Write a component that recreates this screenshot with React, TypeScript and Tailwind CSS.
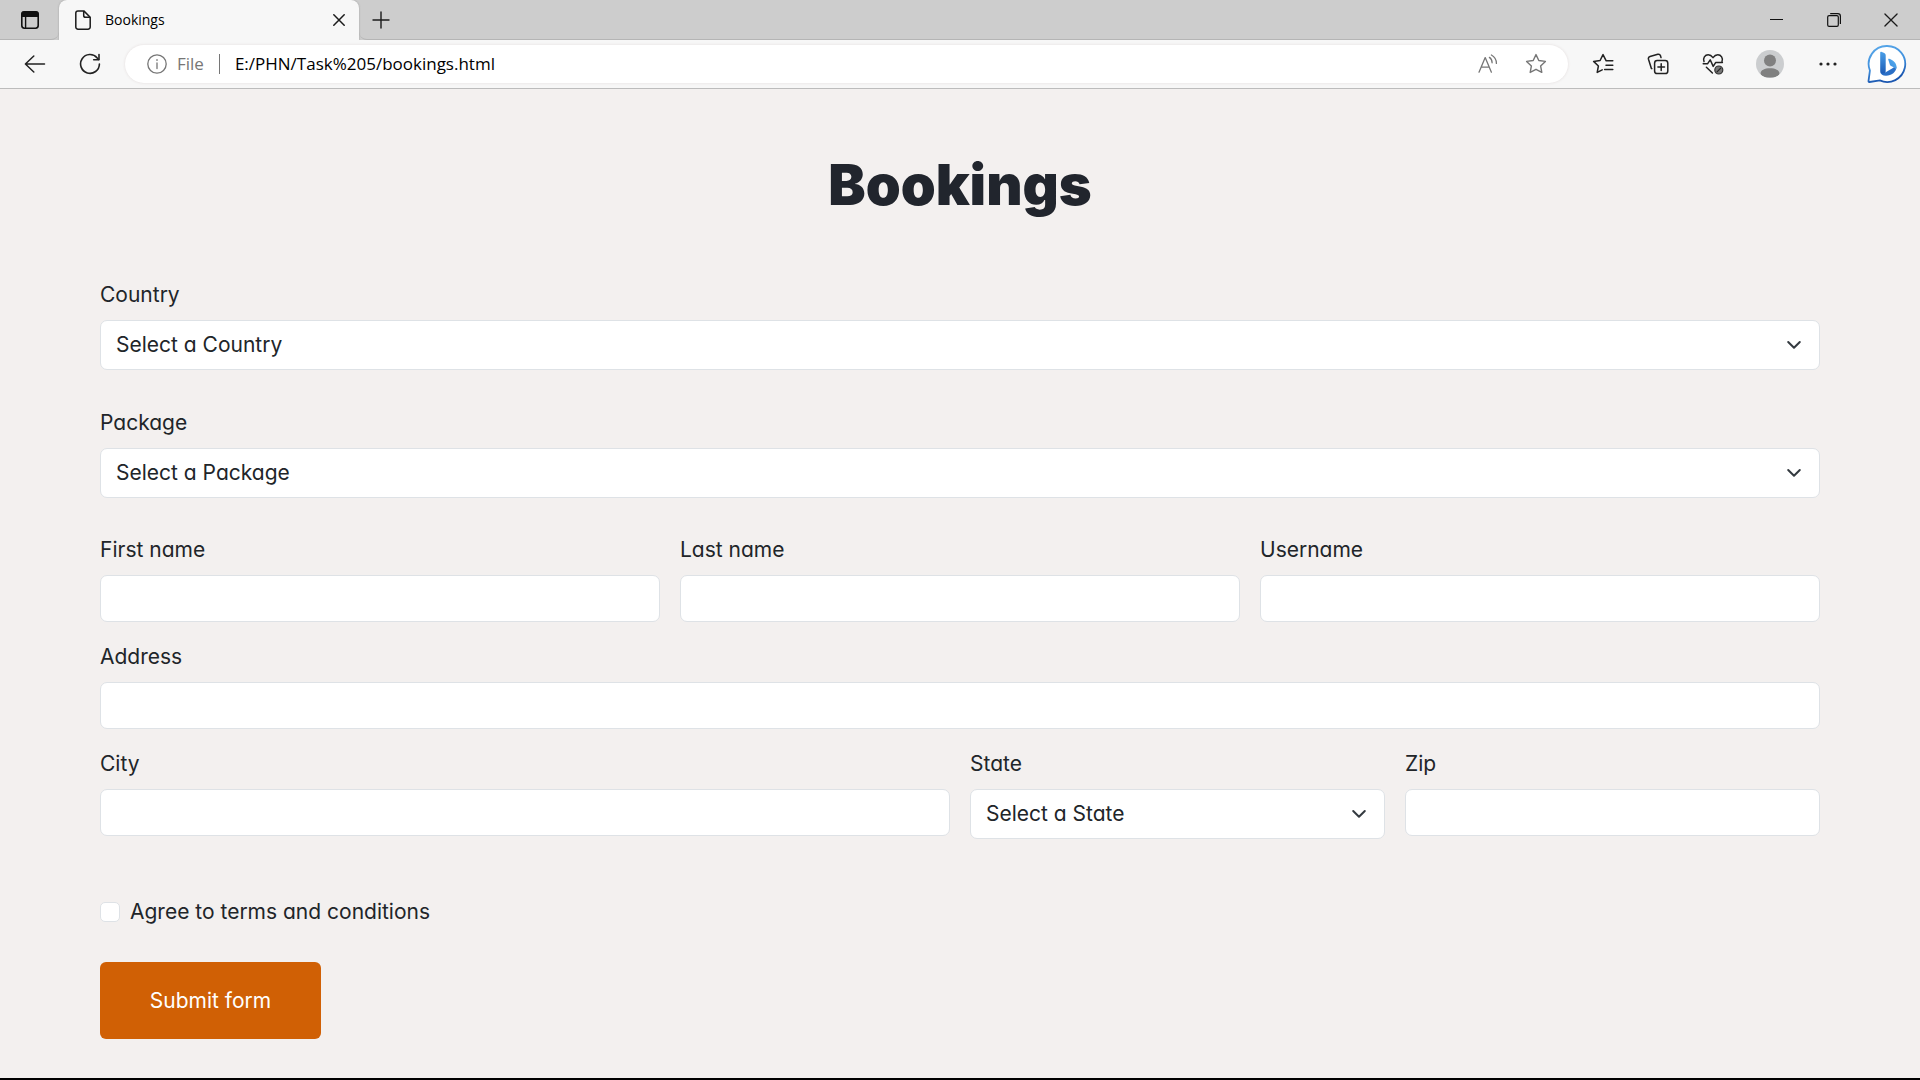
import type { ReactNode } from "react";

function TabActionsIcon() {
  return (
    <svg width="18" height="18" viewBox="0 0 18 18" fill="none" stroke="#111" strokeWidth="1.6">
      <rect x="0.8" y="0.8" width="16.4" height="16.4" rx="2.6" />
      <path d="M1 3.4C1 2 2 1 3.4 1h11.2C16 1 17 2 17 3.4V5.2H1z" fill="#111" />
      <path d="M4.6 5.5v11.5" strokeWidth="1.4" />
    </svg>
  );
}

function FileIcon() {
  return (
    <svg width="16" height="20" viewBox="0 0 16 20" fill="none" stroke="#1b1b1b" strokeWidth="1.5" strokeLinejoin="round">
      <path d="M3 0.9h5.8L15.2 7.2V17a2.2 2.2 0 0 1-2.2 2.2H3A2.2 2.2 0 0 1 0.8 17V3.1A2.2 2.2 0 0 1 3 0.9z" />
      <path d="M8.7 1v4.4a1.9 1.9 0 0 0 1.9 1.9h4.5" />
    </svg>
  );
}

function CloseIcon({ size, width }: { size: number; width: number }) {
  return (
    <svg width={size} height={size} viewBox="0 0 12 12" fill="none" stroke="#1b1b1b" strokeWidth={width} strokeLinecap="round">
      <path d="M0.8 0.8l10.4 10.4M11.2 0.8L0.8 11.2" />
    </svg>
  );
}

function PlusIcon() {
  return (
    <svg width="18" height="18" viewBox="0 0 18 18" fill="none" stroke="#1b1b1b" strokeWidth="1.4" strokeLinecap="round">
      <path d="M9 1v16M1 9h16" />
    </svg>
  );
}

function BackIcon() {
  return (
    <svg width="22" height="18" viewBox="0 0 22 18" fill="none" stroke="#222" strokeWidth="1.5" strokeLinecap="round" strokeLinejoin="round">
      <path d="M20.5 9H1.4M9.8 1L1.4 9l8.4 8" />
    </svg>
  );
}

function RefreshIcon() {
  return (
    <svg width="22" height="22" viewBox="0 0 22 22" fill="none" stroke="#222" strokeWidth="1.6" strokeLinecap="round" strokeLinejoin="round">
      <path d="M20.4 11a9.4 9.4 0 1 1-2.2-6.1l1.3 1.5" />
      <path d="M20 1.6v5.2h-5.3" />
    </svg>
  );
}

function InfoIcon() {
  return (
    <svg width="20" height="20" viewBox="0 0 20 20" fill="none" stroke="#767676" strokeWidth="1.3">
      <circle cx="10" cy="10" r="9.2" />
      <path d="M10 9v5.6" strokeLinecap="round" />
      <circle cx="10" cy="6" r="0.6" fill="#767676" strokeWidth="0.6" />
    </svg>
  );
}

function ReadAloudIcon() {
  return (
    <svg width="20" height="20" viewBox="0 0 20 20" fill="none" stroke="#767676" strokeWidth="1.3" strokeLinecap="round" strokeLinejoin="round">
      <path d="M1 18.2L7.2 3.6l6.2 14.6M3.2 13.2h8" />
      <path d="M11.4 3.4c1.8 1.2 2.7 3 2.7 5.4M13.4 1c3.3 1.8 5 4.6 5 8.4" />
    </svg>
  );
}

function StarIcon() {
  return (
    <svg width="22" height="22" viewBox="0 0 22 22" fill="none" stroke="#767676" strokeWidth="1.4" strokeLinejoin="round">
      <path d="M11 1.6l2.8 5.9 6.6.9-4.8 4.5 1.2 6.5L11 16.3l-5.8 3.1 1.2-6.5L1.6 8.4l6.6-.9z" />
    </svg>
  );
}

function FavoritesIcon() {
  return (
    <svg width="22" height="22" viewBox="0 0 22 22" fill="none" stroke="#222" strokeWidth="1.5" strokeLinecap="round" strokeLinejoin="round">
      <path d="M20.8 7.8h-6.6l-3.2-6.2-2.9 5.9-6.5.9 4.8 4.6-1.2 6.4 5-2.6" />
      <path d="M14 12.2h6.8M12.6 16.6h8.2" />
    </svg>
  );
}

function CollectionsIcon() {
  return (
    <svg width="22" height="22" viewBox="0 0 22 22" fill="none" stroke="#222" strokeWidth="1.5" strokeLinecap="round" strokeLinejoin="round">
      <rect x="7.6" y="7.6" width="13.2" height="13" rx="2.6" />
      <path d="M14.2 10.8v6.6M10.9 14.1h6.6" />
      <path d="M4.8 15.6l-.5-.3-2.8-9A2.3 2.3 0 0 1 3 3.5l7.8-2.2a2.3 2.3 0 0 1 2.7 1.5l.5 1.8" />
    </svg>
  );
}

function EssentialsIcon() {
  return (
    <svg width="22" height="22" viewBox="0 0 22 22" fill="none" stroke="#222" strokeWidth="1.5" strokeLinecap="round" strokeLinejoin="round">
      <path d="M2 8.6C.6 5 3 1.8 6.2 1.8c2.2 0 3.6 1.2 4.8 2.8 1.2-1.6 2.6-2.8 4.8-2.8C19 1.8 21.4 5 20 8.6" />
      <path d="M1.2 10.8h4.3L8.2 6.8l3 6.6 2.4-3.8h6.8M4.4 14.2l6 5.8" />
      <circle cx="16.8" cy="17" r="4" fill="#777" stroke="#333" strokeWidth="1.2" />
      <path d="M15 18.8l3.7-3.7" strokeWidth="1.2" />
    </svg>
  );
}

function AvatarIcon() {
  return (
    <svg width="28" height="28" viewBox="0 0 28 28">
      <clipPath id="avatar-clip">
        <circle cx="14" cy="14" r="14" />
      </clipPath>
      <circle cx="14" cy="14" r="14" fill="#cbcdcf" />
      <g clipPath="url(#avatar-clip)" fill="#808080">
        <circle cx="14" cy="10.4" r="6" />
        <path d="M4.6 23.2c0-3 4-5 9.4-5s9.4 2 9.4 5c0 3-4 4.400-9.400 4.400s-9.400-1.400-9.400-4.400z" />
      </g>
    </svg>
  );
}

function MoreIcon() {
  return (
    <svg width="18" height="4" viewBox="0 0 18 4" fill="#222">
      <circle cx="2" cy="2" r="1.6" />
      <circle cx="9" cy="2" r="1.6" />
      <circle cx="16" cy="2" r="1.6" />
    </svg>
  );
}

function BingIcon() {
  return (
    <svg width="40" height="40" viewBox="0 0 40 40" fill="none">
      <defs>
        <linearGradient id="bubble" x1="0" y1="0" x2="0.3" y2="1">
          <stop offset="0" stopColor="#5aa9ea" />
          <stop offset="0.6" stopColor="#3f8fdc" />
          <stop offset="1" stopColor="#1a56b0" />
        </linearGradient>
        <linearGradient id="stem" x1="0" y1="0" x2="0" y2="1">
          <stop offset="0" stopColor="#4a9fe8" />
          <stop offset="1" stopColor="#1c5ab4" />
        </linearGradient>
        <linearGradient id="bowl" x1="1" y1="0" x2="0" y2="1">
          <stop offset="0" stopColor="#56aef0" />
          <stop offset="1" stopColor="#3b8bdc" />
        </linearGradient>
      </defs>
      <path
        d="M20.2 2a18 18 0 1 1-7.4 34.4L2.4 38c-.6.1-1-.3-.9-.9l1.4-10.6A18 18 0 0 1 20.2 2z"
        fill="#fff"
        stroke="url(#bubble)"
        strokeWidth="1.8"
      />
      <path d="M13.2 8.6c0-.7.5-1 1.100-.8l2.900 1.300c1 .5 1.500 1.300 1.500 2.400v15.800c0 2-1.200 3-2.600 3-1.700 0-2.900-1.300-2.900-3z" fill="url(#stem)" />
      <path d="M13.400 28c.6 1.600 2.400 1.900 4.400.8l6-3.600c2-1.200 4.200-2.800 5.700-2.400.1 5-5 9-10.500 9-3.400 0-5.300-1.400-5.600-3.800z" fill="#2a6fc6" />
      <path d="M21.300 15.800c-.3-.8.2-1.300.9-1 3.600 1.400 7.300 3.800 7.300 8 0 1-.3 2-.8 3-.2-1.400-1.200-2.200-2.600-2.800l-2-.9c-.6-.3-1-.7-1.200-1.400z" fill="url(#bowl)" />
    </svg>
  );
}

function IconButton({ label, className, children }: { label: string; className: string; children: ReactNode }) {
  return (
    <button type="button" aria-label={label} className={`flex shrink-0 items-center justify-center ${className}`}>
      {children}
    </button>
  );
}

function BrowserChrome() {
  return (
    <header className="font-['Open_Sans','Noto_Sans',sans-serif]">
      <div className="flex h-10 bg-[#cdcdcd]">
        <IconButton label="Tab actions" className="w-[59px] rounded-br-lg border-b border-[#b5b5b5]">
          <TabActionsIcon />
        </IconButton>
        <div className="flex w-[300px] items-center rounded-t-lg bg-[#f7f7f7] pr-2.5 pl-4 shadow-[0_0_2px_#999] [clip-path:inset(0_-3px_0_-3px)]">
          <FileIcon />
          <span className="ml-3.5 flex-1 text-[14px] leading-5 text-black">Bookings</span>
          <IconButton label="Close tab" className="size-5">
            <CloseIcon size={12} width={1.5} />
          </IconButton>
        </div>
        <div className="flex flex-1 items-stretch justify-between rounded-bl-lg border-b border-[#b5b5b5]">
          <IconButton label="New tab" className="w-11">
            <PlusIcon />
          </IconButton>
          <div className="flex pr-px">
            <IconButton label="Minimize" className="w-[57px]">
              <svg width="13" height="13" viewBox="0 0 13 13" stroke="#111">
                <path d="M0 6.5h13" />
              </svg>
            </IconButton>
            <IconButton label="Restore" className="w-[57px]">
              <svg width="14" height="14" viewBox="0 0 14 14" fill="none" stroke="#111" strokeWidth="1.2">
                <rect x="0.7" y="2.7" width="10.6" height="10.6" rx="1.4" />
                <path d="M3.2.7h7.6a2.6 2.6 0 0 1 2.6 2.6v7.6" />
              </svg>
            </IconButton>
            <IconButton label="Close window" className="w-[57px]">
              <CloseIcon size={14} width={1.1} />
            </IconButton>
          </div>
        </div>
      </div>

      <div className="flex h-[49px] items-center border-b border-[#bcbcbc] bg-[#f7f7f7] pr-[3px]">
        <IconButton label="Back" className="ml-2 h-10 w-[54px]">
          <BackIcon />
        </IconButton>
        <IconButton label="Refresh" className="h-10 w-14">
          <RefreshIcon />
        </IconButton>
        <div className="ml-[7px] flex h-[38px] min-w-0 flex-1 items-center rounded-full bg-white pr-2.5 pl-[22px] shadow-[0_0_3px_#e2dcdc]">
          <InfoIcon />
          <label htmlFor="address-bar" className="ml-2.5 text-[17px] leading-6 text-[#767676]">
            File
          </label>
          <span className="mx-[15px] h-5 w-px bg-[#767676]" />
          <input
            id="address-bar"
            type="text"
            defaultValue="E:/PHN/Task%205/bookings.html"
            className="min-w-0 flex-1 bg-transparent text-[17px] leading-6 text-black outline-none"
          />
          <IconButton label="Read aloud" className="h-8 w-[52px]">
            <ReadAloudIcon />
          </IconButton>
          <IconButton label="Add to favorites" className="h-8 w-11">
            <StarIcon />
          </IconButton>
        </div>
        <IconButton label="Favorites" className="ml-[7px] h-10 w-[55px]">
          <FavoritesIcon />
        </IconButton>
        <IconButton label="Collections" className="h-10 w-[55px]">
          <CollectionsIcon />
        </IconButton>
        <IconButton label="Browser essentials" className="h-10 w-[55px]">
          <EssentialsIcon />
        </IconButton>
        <IconButton label="Profile" className="h-10 w-[59px]">
          <AvatarIcon />
        </IconButton>
        <IconButton label="Settings and more" className="h-10 w-[58px]">
          <MoreIcon />
        </IconButton>
        <IconButton label="Bing" className="h-10 w-[60px]">
          <BingIcon />
        </IconButton>
      </div>
    </header>
  );
}

function TextField({ id, label, className }: { id: string; label: string; className: string }) {
  return (
    <div className={className}>
      <label htmlFor={id} className="mb-2.5 block">
        {label}
      </label>
      <input
        id={id}
        type="text"
        className="block h-[47px] w-full rounded-[7px] border border-[#dee2e6] bg-white px-4"
      />
    </div>
  );
}

function SelectField({ id, label, placeholder, className }: { id: string; label: string; placeholder: string; className: string }) {
  return (
    <div className={className}>
      <label htmlFor={id} className="mb-2.5 block">
        {label}
      </label>
      <div className="relative">
        <select
          id={id}
          className="block h-[50px] w-full appearance-none rounded-[7px] border border-[#dee2e6] bg-white pr-12 pl-[15px]"
        >
          <option>{placeholder}</option>
        </select>
        <svg
          className="pointer-events-none absolute inset-y-0 right-[18px] my-auto"
          width="16"
          height="10"
          viewBox="0 0 16 10"
          fill="none"
          stroke="#343a40"
          strokeWidth="2"
          strokeLinecap="round"
          strokeLinejoin="round"
        >
          <path d="M2.2 2L8 7.8 13.8 2" />
        </svg>
      </div>
    </div>
  );
}

export default function App() {
  return (
    <div className="flex min-h-screen flex-col border-b-2 border-black bg-[#f3f0ef]">
      <BrowserChrome />
      <main className="px-[100px] pt-[62px] pb-9 font-['Inter','Open_Sans',sans-serif] text-[21px] leading-[30px] text-[#212529] [font-feature-settings:'cv11','ss03']">
        <h1 className="mb-[61px] text-center text-[56px] leading-[68px] font-black text-[#21252d]">Bookings</h1>
        <form className="grid grid-cols-12 gap-5" onSubmit={(e) => e.preventDefault()}>
          <SelectField id="country" label="Country" placeholder="Select a Country" className="col-span-12 mb-[18px]" />
          <SelectField id="package" label="Package" placeholder="Select a Package" className="col-span-12 mb-[17px]" />
          <TextField id="first-name" label="First name" className="col-span-4" />
          <TextField id="last-name" label="Last name" className="col-span-4" />
          <TextField id="username" label="Username" className="col-span-4" />
          <TextField id="address" label="Address" className="col-span-12" />
          <TextField id="city" label="City" className="col-span-6" />
          <SelectField id="state" label="State" placeholder="Select a State" className="col-span-3" />
          <TextField id="zip" label="Zip" className="col-span-3" />
          <div className="col-span-12 mt-[38px] flex items-center gap-2.5">
            <input
              id="terms"
              type="checkbox"
              className="size-5 appearance-none rounded-[5px] border border-[#dee2e6] bg-white checked:bg-[#d06005]"
            />
            <label htmlFor="terms">Agree to terms and conditions</label>
          </div>
          <div className="col-span-12 mt-[15px]">
            <button type="submit" className="block h-[77px] min-w-[221px] rounded-md bg-[#d06005] px-12 text-white">
              Submit form
            </button>
          </div>
        </form>
      </main>
    </div>
  );
}
